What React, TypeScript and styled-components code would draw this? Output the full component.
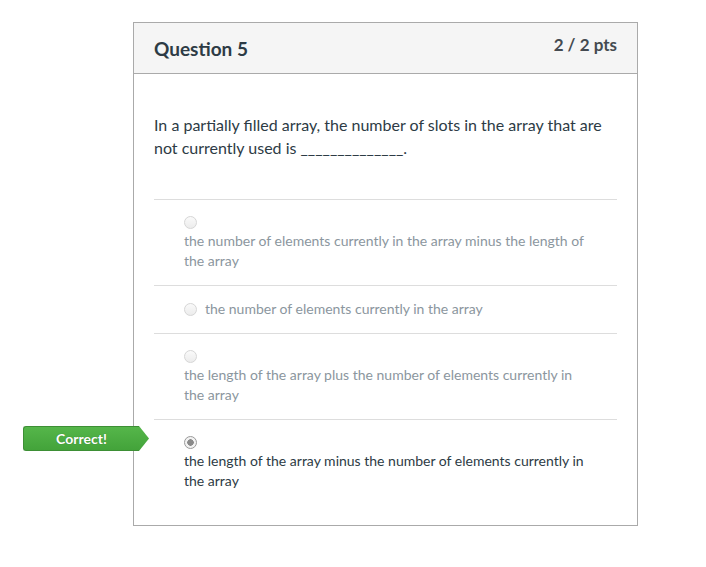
import React from "react";
import styled, { createGlobalStyle } from "styled-components";

const Global = createGlobalStyle`
  html, body { margin: 0; padding: 0; background: #fff; }
  body { font-family: Lato, "Helvetica Neue", Arial, sans-serif; color: #2d3b45; }
`;

const Page = styled.div`
  padding: 22px 0 0 133px;
`;

const Card = styled.div`
  width: 503px;
  border: 1px solid #aaaaaa;
  background: #fff;
`;

const Header = styled.div`
  height: 50px;
  background: #f5f5f5;
  border-bottom: 1px solid #aaaaaa;
  padding: 0 20px;
  display: flex;
  justify-content: space-between;
  align-items: flex-start;
`;

const Title = styled.div`
  font-size: 19px;
  font-weight: 700;
  color: #2d3b45;
  line-height: 22px;
  margin-top: 15px;
`;

const Points = styled.div`
  font-size: 17px;
  font-weight: 700;
  color: #444a50;
  line-height: 20px;
  margin-top: 12px;
`;

const Body = styled.div`
  padding: 39px 20px 20px;
`;

const QuestionText = styled.p`
  margin: 0 0 40px;
  font-size: 16px;
  line-height: 23px;
  color: #2d3b45;
`;

const AnswerList = styled.div`
  display: flex;
  flex-direction: column;
`;

const Answer = styled.div<{ $selected?: boolean }>`
  position: relative;
  border-top: 1px solid #dddddd;
  padding: 13px 18px 14px 30px;
  font-size: 14px;
  line-height: 20px;
  color: ${(p) => (p.$selected ? "#2d3b45" : "#8b969e")};
`;

const Line = styled.div<{ $inline?: boolean }>`
  display: flex;
  flex-direction: ${(p) => (p.$inline ? "row" : "column")};
  align-items: ${(p) => (p.$inline ? "center" : "flex-start")};
  gap: ${(p) => (p.$inline ? "8px" : "0")};
`;

const RadioRow = styled.div<{ $inline?: boolean }>`
  height: ${(p) => (p.$inline ? "20px" : "18px")};
  display: flex;
  align-items: center;
`;

const Radio = styled.span<{ $checked?: boolean }>`
  box-sizing: border-box;
  width: 13px;
  height: 13px;
  border-radius: 50%;
  border: 1px solid ${(p) => (p.$checked ? "#9a9a9a" : "#d6d6d6")};
  background: ${(p) =>
    p.$checked
      ? "radial-gradient(circle, #8a8a8a 0 3px, #f2f2f2 3.5px)"
      : "linear-gradient(#fafafa, #ececec)"};
  display: inline-block;
`;

const Label = styled.div`
  max-width: 405px;
`;

const Badge = styled.div`
  position: absolute;
  left: -131px;
  top: 6px;
  display: flex;
  align-items: stretch;
  height: 25px;
`;

const BadgeBody = styled.div`
  width: 116px;
  box-sizing: border-box;
  background: linear-gradient(#55b64a, #43a33a);
  border: 1px solid #3d8f35;
  border-right: none;
  border-radius: 3px 0 0 3px;
  color: #fff;
  font-weight: 700;
  font-size: 14px;
  display: flex;
  align-items: center;
  justify-content: center;
  text-shadow: 0 0 1px rgba(0, 0, 0, 0.3);
`;

const BadgeTip = styled.svg`
  display: block;
`;

type Opt = { text: string; inline?: boolean; selected?: boolean };

const options: Opt[] = [
  { text: "the number of elements currently in the array minus the length of the array" },
  { text: "the number of elements currently in the array", inline: true },
  { text: "the length of the array plus the number of elements currently in the array" },
  {
    text: "the length of the array minus the number of elements currently in the array",
    selected: true,
  },
];

export default function App() {
  return (
    <>
      <Global />
      <Page>
        <Card>
          <Header>
            <Title>Question 5</Title>
            <Points>2 / 2 pts</Points>
          </Header>
          <Body>
            <QuestionText>
              In a partially filled array, the number of slots in the array that are not currently
              used is ______________.
            </QuestionText>
            <AnswerList>
              {options.map((o, i) => (
                <Answer key={i} $selected={o.selected}>
                  {o.selected && (
                    <Badge>
                      <BadgeBody>Correct!</BadgeBody>
                      <BadgeTip width="10" height="25" viewBox="0 0 10 25">
                        <defs>
                          <linearGradient id="tipg" x1="0" y1="0" x2="0" y2="1">
                            <stop offset="0" stopColor="#55b64a" />
                            <stop offset="1" stopColor="#43a33a" />
                          </linearGradient>
                        </defs>
                        <path d="M0 0 L10 12.5 L0 25 Z" fill="url(#tipg)" />
                      </BadgeTip>
                    </Badge>
                  )}
                  <Line $inline={o.inline}>
                    <RadioRow $inline={o.inline}>
                      <Radio $checked={o.selected} />
                    </RadioRow>
                    <Label>{o.text}</Label>
                  </Line>
                </Answer>
              ))}
            </AnswerList>
          </Body>
        </Card>
      </Page>
    </>
  );
}
